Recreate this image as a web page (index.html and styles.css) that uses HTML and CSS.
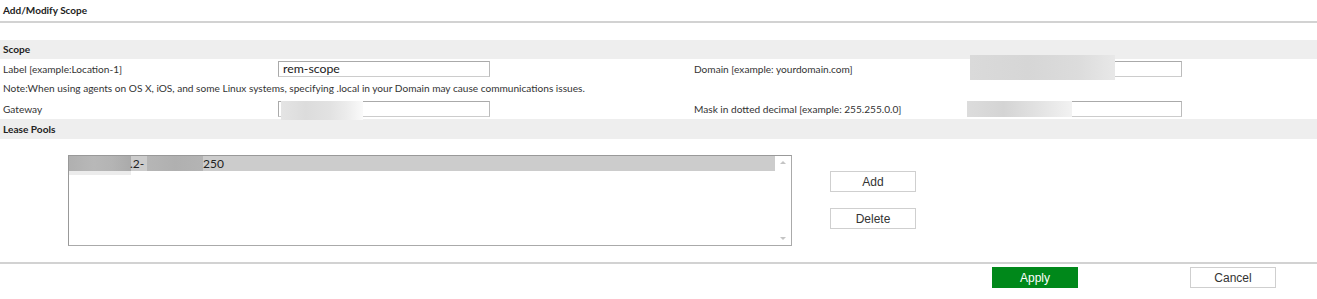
FILE: index.html
```html
<!DOCTYPE html>
<html>
<head>
<meta charset="utf-8">
<link rel="stylesheet" href="styles.css">
</head>
<body>
<div class="page">
  <div class="title">Add/Modify Scope</div>
  <div class="band first">Scope</div>
  <div class="row r1">
    <div class="lab">Label [example:Location-1]</div>
    <div class="inp"><span class="val">rem-scope</span></div>
    <div class="lab right">Domain [example: yourdomain.com]</div>
    <div class="inp"><span class="blur b-domain"></span></div>
  </div>
  <div class="note">Note:When using agents on OS X, iOS, and some Linux systems, specifying .local in your Domain may cause communications issues.</div>
  <div class="row r2">
    <div class="lab">Gateway</div>
    <div class="inp"><span class="blur b-gw"></span></div>
    <div class="lab right">Mask in dotted decimal [example: 255.255.0.0]</div>
    <div class="inp"><span class="blur b-mask"></span></div>
  </div>
  <div class="band lease">Lease Pools</div>
  <div class="pools">
    <div class="listbox">
      <div class="items">
        <div class="item sel"><span class="blur b-a"></span><span class="t1">.2-</span><span class="blur b-b"></span><span class="t2">250</span></div>
      </div>
      <div class="scroll">
        <svg width="16" height="89" viewBox="0 0 16 89"><path d="M5 8 L8 5 L11 8 Z" fill="#c4c4c4"/><path d="M5 81 L8 84 L11 81 Z" fill="#c4c4c4"/></svg>
      </div>
    </div>
    <div class="side">
      <button class="btn">Add</button>
      <button class="btn">Delete</button>
    </div>
  </div>
  <div class="footer">
    <button class="btn apply">Apply</button>
    <button class="btn cancel">Cancel</button>
  </div>
</div>
</body>
</html>
```

FILE: styles.css
```css
* { box-sizing: border-box; }
body {
  margin: 0;
  font-family: Lato, "Open Sans", sans-serif;
  font-size: 10.12px;
  color: #333;
  background: #fff;
}
.title {
  height: 23px;
  padding: 4px 0 0 3px;
  font-weight: bold;
  font-size: 10px;
  color: #222;
  border-bottom: 2px solid #d2d2d2;
}
.band {
  height: 20px;
  line-height: 20px;
  background: #eeeeee;
  padding-left: 3px;
  font-weight: bold;
  color: #222;
}
.band.first {
  margin-top: 17px;
  height: 19px;
  line-height: 19px;
}
.row {
  display: flex;
  align-items: center;
  height: 20px;
}
.lab {
  width: 278px;
  padding-left: 3px;
  flex: none;
}
.lab.right {
  margin-left: 204px;
  padding-left: 0;
  width: 276px;
}
.inp {
  position: relative;
  width: 212px;
  height: 16px;
  border: 1px solid #aaa;
  border-right-color: #bbb;
  border-bottom-color: #ccc;
  background: #fff;
  flex: none;
}
.val {
  position: absolute;
  left: 4px;
  top: 0;
  font-size: 12.3px;
  line-height: 14px;
  color: #1a1a1a;
}
.note {
  height: 19px;
  line-height: 19px;
  padding-left: 3px;
}
.r2 { height: 21px; }
.blur {
  position: absolute;
  display: block;
}
.b-gw {
  left: 2px; top: -1px; width: 82px; height: 19px;
  background: linear-gradient(90deg, #e4e4e4 0%, #dcdcdc 30%, #e2e2e2 60%, #ececec 80%, #fafafa 100%);
}
.b-domain {
  left: -1px; top: -7px; width: 145px; height: 25px;
  background: linear-gradient(90deg, #dadada 0%, #d6d6d6 40%, #dcdcdc 75%, #e8e8e8 100%);
}
.b-mask {
  left: -4px; top: -1px; width: 105px; height: 16px;
  background: linear-gradient(90deg, #dcdcdc 0%, #d4d4d4 35%, #e6e6e6 75%, #f2f2f2 100%);
}
.pools {
  display: flex;
  padding: 16px 0 0 68px;
  height: 123px;
}
.listbox {
  display: flex;
  width: 724px;
  height: 91px;
  border: 1px solid #999;
  border-right-color: #aaa;
  border-bottom-color: #aaa;
  background: #fff;
}
.items { flex: 1; }
.item {
  position: relative;
  height: 15px;
  background: #cccccc;
  font-size: 12px;
  line-height: 15px;
  color: #222;
}
.item .blur { top: 0; height: 15px; }
.b-a {
  left: 0; width: 62px;
  background: linear-gradient(90deg, #b0b0b0 0%, #b8b8b8 40%, #b4b4b4 70%, #aaaaaa 100%);
}
.b-a::after {
  content: "";
  position: absolute;
  left: 0; top: 15px; width: 62px; height: 4px;
  background: #ececec;
}
.t1 { position: absolute; left: 61px; }
.b-b {
  left: 78px; width: 56px;
  background: linear-gradient(90deg, #b6b6b6 0%, #b0b0b0 50%, #b4b4b4 100%);
}
.t2 { position: absolute; left: 134px; }
.scroll { width: 16px; flex: none; }
.scroll svg { display: block; }
.side {
  display: flex;
  flex-direction: column;
  gap: 16px;
  margin-left: 38px;
  padding-top: 16px;
}
.btn {
  width: 86px;
  height: 21px;
  padding: 0;
  border: 1px solid #cfcfcf;
  background: #fff;
  font-family: "Liberation Sans", Arial, sans-serif;
  font-size: 12px;
  color: #333;
}
.footer {
  border-top: 2px solid #d2d2d2;
  display: flex;
  padding: 3px 0 0 992px;
  gap: 112px;
}
.apply {
  background: #00881a;
  border-color: #00881a;
  color: #fff;
}
.cancel { border-color: #cfcfcf; }
```
